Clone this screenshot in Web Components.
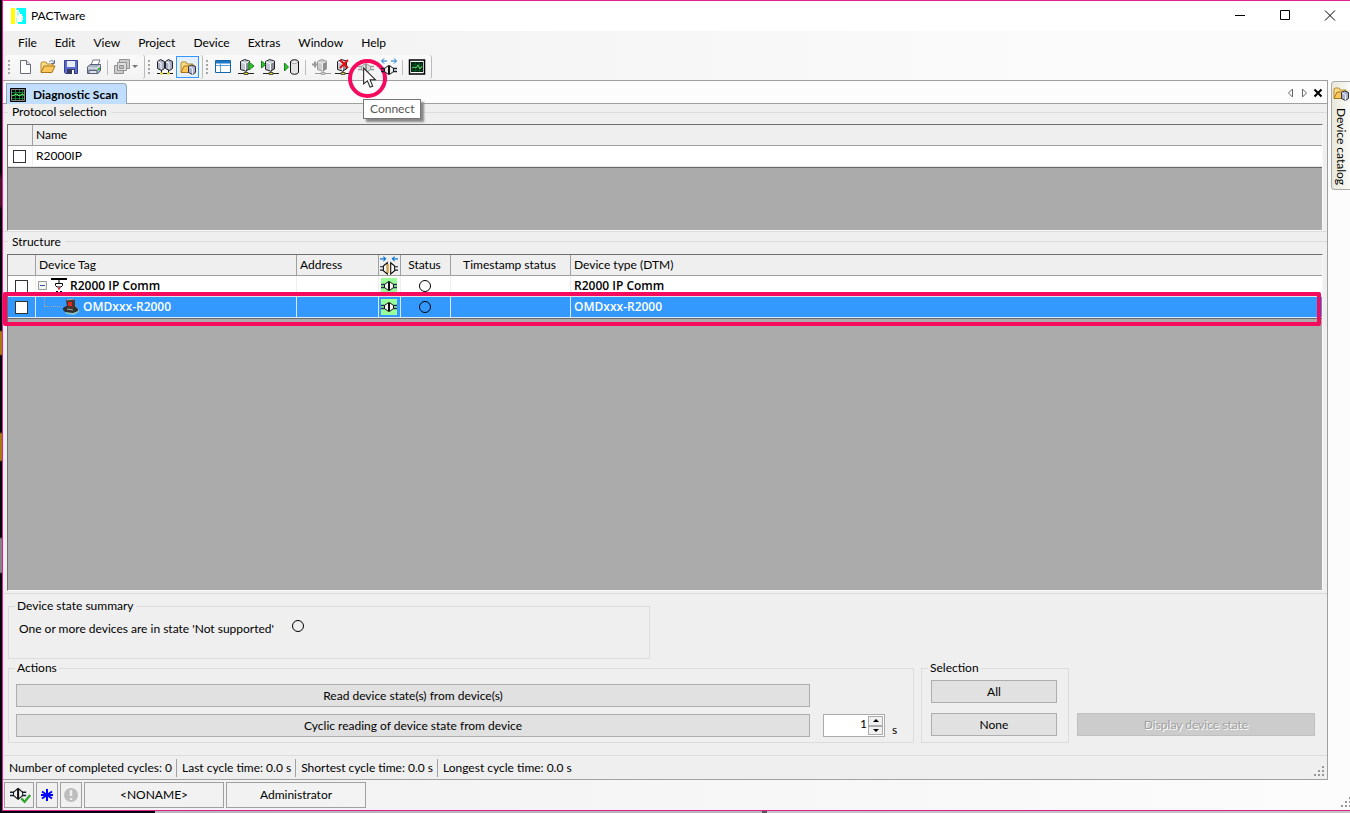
<!DOCTYPE html>
<html lang="en">
<head>
<meta charset="utf-8">
<title>PACTware</title>
<style>
html,body{height:100%;margin:0}
body{font:12px/16px Lato,"Open Sans",sans-serif;color:#000;background:#000;overflow:hidden}
</style>
</head>
<body>
<pact-window></pact-window>
<script>
const G = '#9a9a9a';
/* device block on a bus line, shared by several toolbar icons */
const cube = (f, s, l, y) => `<path d="M2.500 2.500l4-2 5 1.500v8l-4 2-5-1.500z" fill="${f}" stroke="${s}"/><path d="M3 3l4.500 1.500v7M7.500 4.500l3.500-2" fill="none" stroke="${l}"/><path d="M8 4.500v7l3-1.500V3z" fill="#000" opacity=".3"/><path d="M8 12v3" stroke="${s}"/><path d="M0 14.500h16" stroke="${s}"/><path d="M6 13.500h4v2H6z" fill="${y}" stroke="${s}" stroke-width=".7"/>`;
const plug = (c, f, b, y) => `<g transform="translate(0 ${y})"><path d="M0 6.500h4M12 6.500h4M0 9.500h4M12 9.500h4" stroke="${b}" stroke-width="1.400"/><path d="M7.500 3.500L3.500 6.500v3l4 3zM8.500 3.500l4 3v3l-4 3z" fill="${f}" stroke="${c}"/></g>`;
const folder = `<path d="M1 13V4l1-1h4l1 2h6v3" fill="#f7dc8a" stroke="#b88a2a"/><path d="M1 13.500L4 7h11l-3 6.500z" fill="#fbc65a" stroke="#a8761c"/>`;
const ICONS = {
 logo:`<path d="M0 0h4v16H0z" fill="#ff0"/><path d="M5.500 0h9.500v16H7v-2h4v-2h1V8h-1V6H9V4H8V2H5.500z" fill="#0ff"/><path d="M5.500 3.500h1v4h1v-4M5.500 10v5" fill="none" stroke="#9ff"/>`,
 page:`<path d="M3.500 1.500h6l4 4v9h-10z" fill="#fff" stroke="#666b7a"/><path d="M9.500 1.500v4h4" fill="#dde" stroke="#666b7a"/>`,
 open:folder+`<path d="M9 3c2-2 4-2 5 1M14.500 1v3.500H11" fill="none" stroke="#667290"/>`,
 save:`<path d="M1.500 1.500h13v13h-12l-1-1z" fill="#5b6bd0" stroke="#343f92"/><path d="M4 2h8v6H4z" fill="#e8ecf8"/><path d="M4 10h8v5H4z" fill="#353a58"/><path d="M9 11h2v4H9z" fill="#fff"/>`,
 print:`<path d="M5 6l2-5h7l-2 5z" fill="#fff" stroke="#778"/><path d="M1.500 8L4 5.500h10.500v6L12 14.500H1.500z" fill="#aab3c5" stroke="#566074"/><path d="M2 9h10l2-3" fill="none" stroke="#eee"/><path d="M3 11.500h8v3H3z" fill="#dde3ee" stroke="#566074"/><path d="M12 9h2v2h-2z" fill="#25b82a"/>`,
 stack:`<g stroke="#929292" fill="#ccc"><path d="M5.500.500h10v9h-10z"/><path d="M.500 6.500h9v8h-9z"/><path d="M3.500 3.500h9v8h-9z" fill="#dedede"/><path d="M5.500 6.500h4v3h-4z" fill="#bbb"/></g>`,
 net:`<g fill="#a9adc6" stroke="#222"><path d="M.500 2.500l3-2 4 2v7l-3 2-4-2zM8.500 2.500l3-2 4 2v7l-3 2-4-2z"/><path d="M4.500 11v3M11.500 11v3" fill="none"/></g><path d="M1 3l3 1v6M9 3l3 1v6" fill="none" stroke="#fff"/><path d="M0 14.500h16" stroke="#111"/><path d="M3 13.500h3v2H3zM10 13.500h3v2h-3z" fill="#dfd533"/>`,
 catalog:folder+`<path d="M8.500 7.500l3-1.500 4 1.500v6l-3 2-4-2z" fill="#aab1ce" stroke="#333"/><path d="M9 8l3.500 1.500v6" fill="none" stroke="#eef"/>`,
 table:`<path d="M.500 1.500h15v12H.500z" fill="#fff" stroke="#1464a8"/><path d="M1 2h14v2.500H1z" fill="#1d78c8"/><path d="M5.500 4v9M1 6.500h14" stroke="#57a2dc"/>`,
 upload:cube('#c3c6d6','#222','#fff','#dfd533')+`<path d="M11 3l5 4-5 4z" fill="#2fc72f" stroke="#168116"/>`,
 download:`<g transform="translate(2 0)">`+cube('#c3c6d6','#222','#fff','#dfd533')+`</g><path d="M.500 2l4 3.500-4 3.500z" fill="#2fc72f" stroke="#168116"/>`,
 store:`<path d="M6.500 3c0-3 8-3 8 0v10c0 3-8 3-8 0z" fill="#e4e4e4" stroke="#111"/><path d="M7 3c1 2 6 2 7 0" fill="#fff" stroke="#999"/><path d="M.500 4l4 4-4 4z" fill="#2fc72f" stroke="#168116"/>`,
 addoff:`<g transform="translate(3 0)">`+cube('#ccc',G,'#eee','#ccc')+`</g><path d="M0 5.500h6M3 2.500v6" stroke="${G}" stroke-width="2"/>`,
 remove:cube('#c3c6d6','#222','#fff','#dfd533')+`<path d="M5 1l8 8M13 1L5 9" stroke="#e01010" stroke-width="2"/>`,
 connect:plug(G,'#ddd',G,1)+`<path d="M2 1.500h4M10 1.500h4" stroke="${G}"/>`,
 disconnect:plug('#111','#eee','#123',3)+`<path d="M1 2h5M10 2h5M3-.500L.500 2 3 4.500M13-.500L15.500 2 13 4.500" fill="none" stroke="#0b6fd0"/>`,
 scan:`<path d="M.500 1h15v14H.500z" fill="#fff" stroke="#000" stroke-width="1.500"/><path d="M2 3h12v10H2z" fill="#062a14"/><path d="M3 5.500h10M3 8.500h10M3 11.500h10M6.500 3v10M10.500 3v10" stroke="#0a6b2b" stroke-width=".5"/><path d="M3 9l2-1 2 1 2-3 2 4 2-3" fill="none" stroke="#6bdc72"/>`,
 tabscan:`<path d="M.500 1.500h15v13H.500z" fill="#000" stroke="#000"/><path d="M2 5.500h12M2 8.500h12M2 11.500h12M5.500 3v10M9.500 3v10M12.500 3v10" stroke="#127a30"/><path d="M1.500 2.500h13v11h-13z" fill="none" stroke="#ddd" stroke-width=".6"/><path d="M2 9l2-1 3-1 2 2 3-2 2 1" fill="none" stroke="#69ff75"/>`,
 link:plug('#111','#f5f5f5','#20304a',0),
 headlink:`<path d="M0 2.500h5M3 .500l2 2-2 2M16 2.500h-5M13 .500l-2 2 2 2" fill="none" stroke="#0b76d8"/><path d="M0 9.500h3M13 9.500h3M0 12.500h3M13 12.500h3" stroke="#123"/><path d="M6.500 6L3 9v4l3.500 3z" fill="#fff" stroke="#111"/><path d="M9.500 6L13 9v4l-3.500 3z" fill="#fff" stroke="#111"/><path d="M7 7v8" stroke="#e6a11b" stroke-width="1.500"/>`,
 ready:`<g transform="scale(.9 1)">`+plug('#111','#f5f5f5','#123',-1)+`</g><path d="M10 11l3 3 5-6" fill="none" stroke="#2fa42f" stroke-width="2"/>`,
 star:`<path d="M8 2v12M3 4.500l10 7M13 4.500l-10 7M2 8h12" stroke="#00f" stroke-width="2"/>`,
 warn:`<circle cx="8" cy="8" r="7" fill="#bdbdbd"/><path d="M8 3v6M8 11v2" stroke="#eee" stroke-width="2.500"/>`,
 comm:`<path d="M0 1h16" stroke="#000" stroke-width="2"/><path d="M8 2v3" stroke="#000"/><path d="M4.500 5.500h7v2L10 9H6L4.500 7.500z" fill="#fff" stroke="#000"/><path d="M7 9.500h2v2H7z" fill="#e22"/><path d="M5 13.500h2M9 13.500h2" stroke="#000"/>`,
 lidar:`<path d="M1 10l2-3 9-1 4 5v2l-5 3-8-1z" fill="#8cc5c3"/><path d="M0 9l3-2h9l3 3v2l-5 2-8-1-2-2z" fill="#30302f"/><path d="M3 1l8-1 1 2v6c-2 2-7 2-8 0z" fill="#493530"/><path d="M5 3h4v4H5z" fill="#df2a20"/><path d="M4 1l7-1M4 10l6 1" stroke="#aaa"/>`,
 min:`<path d="M3 7.500h10" stroke="#000"/>`,
 max:`<path d="M3.500 2.500h9v9h-9z" fill="none" stroke="#000"/>`,
 close:`<path d="M3 2.500l10 10M13 2.500L3 12.500" stroke="#000"/>`,
 left:`<path d="M10.500 4v8l-4-4z" fill="none" stroke="#666"/>`,
 right:`<path d="M6.500 4v8l4-4z" fill="none" stroke="#666"/>`,
 bold:`<path d="M4.500 4.500l7 7M11.500 4.500l-7 7" stroke="#000" stroke-width="2"/>`,
 ring:`<circle cx="8" cy="8" r="5.500" fill="none" stroke="#000"/>`,
 down:`<path d="M5 6h6l-3 3z" fill="#777"/>`,
 minus:`<path d="M3.500 3.500h8v8h-8z" fill="#f4f4f4" stroke="#999"/><path d="M5 7.500h5" stroke="#3453a0"/>`,
 grip:`<path d="M11 3h2v2h-2zM7 7h2v2H7zM11 7h2v2h-2zM3 11h2v2H3zM7 11h2v2H7zM11 11h2v2h-2z" fill="#999"/>`,
 pointer:`<path d="M2.500 .500v15l3.500-3 2.500 6 2.500-1-2.500-6h5z" fill="#fff" stroke="#222"/>`
};
function define(name, html, setup) {
  const t = document.createElement('template');
  t.innerHTML = '<style>*{box-sizing:border-box}:host{display:block;box-sizing:border-box}</style>' + html;
  customElements.define(name, class extends HTMLElement {
    connectedCallback() {
      if (this.shadowRoot) return;
      this.attachShadow({mode:'open'}).append(t.content.cloneNode(true));
      if (setup) setup(this, this.shadowRoot);
    }
  });
}

define('pact-icon', `<style>:host{width:16px;height:16px;flex:none}svg{display:block;width:100%;height:100%;overflow:visible}</style>`, (h, r) => {
  r.innerHTML += `<svg viewBox="0 0 16 16" aria-hidden="true">${ICONS[h.getAttribute('name')]}</svg>`;
});

define('pact-titlebar', `<style>
:host{display:flex;align-items:center;height:30px;padding-left:8px;background:#fff}
.t{flex:1;margin-left:4px}
button{width:45px;height:30px;border:0;background:none;padding:0;display:grid;place-items:center}
nav{display:flex;margin-right:-2px}
</style><pact-icon name="logo"></pact-icon><span class="t"><slot></slot></span>
<nav><button aria-label="Minimize"><pact-icon name="min"></pact-icon></button><button aria-label="Maximize"><pact-icon name="max"></pact-icon></button><button aria-label="Close"><pact-icon name="close"></pact-icon></button></nav>`);

define('pact-menubar', `<style>
:host{display:flex;height:24px;align-items:center;padding-left:6px}
button{font:inherit;color:inherit;border:0;background:none;padding:0 9px;height:20px}
</style><button>File</button><button>Edit</button><button>View</button><button>Project</button><button>Device</button><button>Extras</button><button>Window</button><button>Help</button>`);

define('pact-tool', `<style>
button{position:relative;display:flex;align-items:center;justify-content:center;width:23px;height:22px;padding:0;border:1px solid transparent;background:none;font:inherit}
:host([pressed]) button{border-color:#3399ff;background:#e3effb}
</style><button><pact-icon></pact-icon><slot></slot></button>`, (h, r) => {
  const i = r.querySelector('pact-icon');
  const n = document.createElement('pact-icon');
  n.setAttribute('name', h.getAttribute('icon'));
  i.replaceWith(n);
  r.querySelector('button').setAttribute('aria-label', h.getAttribute('label'));
});

define('pact-toolstrip', `<style>
:host{display:flex;align-items:center;height:24px;padding-right:3px;border-right:1px solid #bbb;border-radius:3px;background:linear-gradient(#fafafa,#f3f3f3)}
i{width:2px;height:15px;margin:0 3px;background:repeating-linear-gradient(#a5a5a5 0 2px,transparent 2px 4px)}
</style><i></i><slot></slot>`);

define('pact-toolbar', `<style>
:host{display:flex;height:25px;align-items:start;padding-left:2px;position:relative;z-index:5}
hr{width:1px;height:15px;border:0;margin:0 2px;background:#bdbdbd}
.drop{margin:0 -2px 0 -6px}
.hot{position:relative}
.ring{position:absolute;left:-6px;top:3px;width:39px;height:39px;border:4px solid #f50a5e;border-radius:50%}
.cur{position:absolute;left:7px;top:10px;width:17px;height:20px}
.tip{position:absolute;left:9px;top:43px;height:20px;padding:0 6px;line-height:18px;border:1px solid #767676;background:#fff;color:#575757;box-shadow:3px 3px 2px #888}
</style>
<pact-toolstrip><pact-tool icon="page" label="New"></pact-tool><pact-tool icon="open" label="Open"></pact-tool><pact-tool icon="save" label="Save"></pact-tool><pact-tool icon="print" label="Print"></pact-tool><hr><pact-tool icon="stack" label="Windows"></pact-tool><pact-icon class="drop" name="down"></pact-icon></pact-toolstrip>
<pact-toolstrip><pact-tool icon="net" label="Project view"></pact-tool><pact-tool icon="catalog" label="Device catalog" pressed></pact-tool></pact-toolstrip>
<pact-toolstrip><pact-tool icon="table" label="Device data"></pact-tool><pact-tool icon="upload" label="Load from device"></pact-tool><pact-tool icon="download" label="Store to device"></pact-tool><pact-tool icon="store" label="Parameter"></pact-tool><hr><pact-tool icon="addoff" label="Add device"></pact-tool><pact-tool icon="remove" label="Delete device"></pact-tool><div class="hot"><pact-tool icon="connect" label="Connect device"></pact-tool><div class="ring"></div><pact-icon class="cur" name="pointer"></pact-icon><div class="tip" role="tooltip">Connect</div></div><pact-tool icon="disconnect" label="Disconnect"></pact-tool><hr><pact-tool icon="scan" label="Diagnostic scan"></pact-tool></pact-toolstrip>`);

define('pact-tabstrip', `<style>
:host{display:flex;height:23px;border-bottom:1px solid #a0a0a0;padding:2px 0 0 3px;background:#fcfcfc}
.tab{display:flex;align-items:center;gap:7px;height:21px;margin-bottom:-1px;padding:1px 8px 0 3px;border:1px solid #91a7b4;border-bottom:0;border-radius:0 4px 0 0;background:#c1deff;font:inherit;font-weight:700;color:#000;white-space:nowrap}
nav{margin-left:auto;display:flex;align-items:center;padding-right:3px}
nav button{border:0;background:none;padding:0;width:14px;display:grid;place-items:center}
</style><button class="tab"><pact-icon name="tabscan"></pact-icon><slot></slot></button>
<nav><button aria-label="Previous"><pact-icon name="left"></pact-icon></button><button aria-label="Next"><pact-icon name="right"></pact-icon></button><button aria-label="Close tab"><pact-icon name="bold"></pact-icon></button></nav>`);

define('pact-caption', `<style>
:host{display:flex;align-items:center;height:20px;gap:4px;padding:0 0 4px 9px}
:host::after{content:"";flex:1;height:1px;background:#dcdcdc}
:host::before{content:"";width:5px;margin-left:-9px;height:1px;background:#dcdcdc}
</style><slot></slot>`);

const grid = `
:host{background:#ababab;border:1px solid #6f6f6f;border-right-color:#f8f8f8;border-bottom-color:#f8f8f8;position:relative}
table{width:100%;border-collapse:separate;border-spacing:0;table-layout:fixed;border-bottom:1px solid #696969}
th,td{height:21px;padding:0 0 0 3px;text-align:left;font-weight:400;line-height:18px;overflow:hidden;white-space:nowrap;border-right:1px solid #eee}
th{background:#efefef;border-right-color:#a0a0a0;border-bottom:1px solid #a0a0a0}
td{background:#fff;border-bottom:1px solid #e4e4e4}
th:last-child,td:last-child{border-right:0}
input{appearance:none;display:block;width:13px;height:13px;margin:0;border:1px solid #333;background:#fff}
`;
define('pact-protocols', `<style>${grid}
.c{width:25px}td.c{padding-left:5px}
</style><table><thead><tr><th class="c"></th><th>Name</th></tr></thead><tbody><tr><td class="c"><input type="checkbox" aria-label="R2000IP"></td><td>R2000IP</td></tr></tbody></table>`);

define('pact-structure', `<style>${grid}
td.c{padding-left:7px}
.m{padding:0 2px 0 0;text-align:center}
.m pact-icon{margin:auto}
.link pact-icon{width:18px;height:18px}
td.link pact-icon{background:#99ff99;width:16px;height:16px}
b{font-family:"Open Sans",sans-serif;font-weight:600}
.n{display:flex;align-items:center}
.n b{margin-left:4px}
.tree{margin-left:-4px}
.tree b{margin-left:3px}
.branch{width:18px;height:12px;margin:-12px 1px 0 5px;border-left:1px dotted #aaa;border-bottom:1px dotted #aaa}
tr.on td{background:#3399ff;color:#fff;border-color:#dceaf8}
.mark{position:absolute;left:-5px;right:1px;top:37px;height:34px;border:4px solid #f50a5e;border-radius:2px;z-index:2}
</style><table><colgroup><col style="width:28px"><col style="width:261px"><col style="width:82px"><col style="width:22px"><col style="width:50px"><col style="width:120px"><col></colgroup>
<thead><tr><th></th><th>Device Tag</th><th>Address</th><th class="m link"><pact-icon name="headlink"></pact-icon></th><th class="m">Status</th><th class="m">Timestamp status</th><th>Device type (DTM)</th></tr></thead>
<tbody><tr><td class="c"><input type="checkbox" aria-label="R2000 IP Comm"></td><td><div class="n tree"><pact-icon name="minus"></pact-icon><pact-icon name="comm"></pact-icon><b>R2000 IP Comm</b></div></td><td></td><td class="m link"><pact-icon name="link"></pact-icon></td><td class="m"><pact-icon name="ring"></pact-icon></td><td></td><td><b>R2000 IP Comm</b></td></tr>
<tr class="on"><td class="c"><input type="checkbox" aria-label="OMDxxx-R2000"></td><td><div class="n"><span class="branch"></span><pact-icon name="lidar"></pact-icon><b>OMDxxx-R2000</b></div></td><td></td><td class="m link"><pact-icon name="link"></pact-icon></td><td class="m"><pact-icon name="ring"></pact-icon></td><td></td><td><b>OMDxxx-R2000</b></td></tr></tbody></table><div class="mark"></div>`);

define('pact-group', `<style>
fieldset{position:relative;margin:0;padding:0;border:1px solid #dcdcdc;height:100%;min-width:0}
legend{position:absolute;left:6px;top:-9px;padding:0 2px;background:#efefef;white-space:nowrap}
</style><fieldset><legend></legend><slot></slot></fieldset>`, (h, r) => { r.querySelector('legend').textContent = h.getAttribute('label'); });

define('pact-button', `<style>
button{display:block;width:100%;height:23px;padding:0;border:1px solid #adadad;background:#e1e1e1;font:inherit;color:#000}
button:disabled{background:#ccc;border-color:#bfbfbf;color:#a0a0a0;text-shadow:1px 1px #fff}
</style><button><slot></slot></button>`, (h, r) => { r.querySelector('button').disabled = h.hasAttribute('disabled'); });

define('pact-spinner', `<style>
:host{display:flex;width:62px;height:23px;border:1px solid #ababab;background:#fff;padding:1px}
input{flex:1;min-width:0;border:0;padding:0 1px 3px 0;font:inherit;text-align:right;background:none}
span{display:flex;flex-direction:column;width:15px}
button{flex:1;padding:0;border:1px solid #acacac;background:#f0f0f0;display:grid;place-items:center}
i{border:3px solid transparent;border-top:0;border-bottom-color:#000}
.d{transform:rotate(180deg)}
</style><input type="text" value="1" aria-label="Cycle interval in seconds"><span><button aria-label="Increase"><i></i></button><button aria-label="Decrease"><i class="d"></i></button></span>`);

define('pact-controls', `<style>
:host{padding:12px 12px 12px 5px;border-top:1px solid #dcdcdc}
.sum{width:642px;height:53px}
.state{display:flex;padding:14px 0 0 10px;gap:16px}
.state pact-icon{margin-top:-3px}
.row{display:flex;height:75px;margin-top:9px}
.act{flex:1}
.sel{width:148px;margin-left:7px}
.in{display:grid;grid-template-columns:1fr 62px 12px;column-gap:7px;row-gap:7px;padding:15px 15px 0 7px;align-items:start}
.in .one{grid-column:1}
.in pact-spinner{margin-left:6px;margin-right:-6px}
.in small{font-size:12px;line-height:14px;margin:9px 0 0 6px}
.pick{display:grid;gap:10px;padding:11px 11px 0 9px}
.show{width:238px;margin:45px 0 0 8px}
</style>
<pact-group class="sum" label="Device state summary"><div class="state"><span>One or more devices are in state 'Not supported'</span><pact-icon name="ring"></pact-icon></div></pact-group>
<div class="row"><pact-group class="act" label="Actions"><div class="in"><pact-button class="one">Read device state(s) from device(s)</pact-button><pact-button class="one">Cyclic reading of device state from device</pact-button><pact-spinner></pact-spinner><small>s</small></div></pact-group>
<pact-group class="sel" label="Selection"><div class="pick"><pact-button>All</pact-button><pact-button>None</pact-button></div></pact-group>
<pact-button class="show" disabled>Display device state</pact-button></div>`);

define('pact-cycles', `<style>
:host{display:flex;align-items:center;height:24px;border-top:1px solid #dcdcdc;padding-left:6px}
span{height:18px;line-height:18px;padding-right:4px;margin-right:5px;border-right:1px solid #a0a0a0;white-space:nowrap}
span:last-of-type{border:0}
pact-icon{margin:7px 0 0 auto}
</style><span>Number of completed cycles: 0</span><span>Last cycle time: 0.0 s</span><span>Shortest cycle time: 0.0 s</span><span>Longest cycle time: 0.0 s</span><pact-icon name="grip"></pact-icon>`);

define('pact-status', `<style>
:host{display:flex;gap:2px;height:30px;padding:2px 0 2px 1px;background:linear-gradient(90deg,#f0f0f0,#fcfcfc)}
div{display:grid;place-items:center;height:26px;width:22px;border:1px solid #a0a0a0}
.w{width:30px}.t{width:140px}
.ready{width:18px;height:18px}
.g{margin:12px -4px 0 auto}
</style><div class="w"><pact-icon class="ready" name="ready"></pact-icon></div><div><pact-icon name="star"></pact-icon></div><div><pact-icon name="warn"></pact-icon></div><div class="t">&lt;NONAME&gt;</div><div class="t">Administrator</div><pact-icon class="g" name="grip"></pact-icon>`);

define('pact-sidetab', `<style>
:host{width:22px;padding:1px 0 0 3px;background:#fcfcfc}
button{display:flex;align-items:center;gap:7px;writing-mode:vertical-lr;width:19px;height:109px;padding:3px 1px;border:1px solid #aaa;border-right:0;border-radius:4px 0 0 4px;background:linear-gradient(90deg,#e8e8da,#fbfbf8);font:inherit;white-space:nowrap}
</style><button><pact-icon name="catalog"></pact-icon><slot></slot></button>`);

define('pact-window', `<style>
:host{display:flex;flex-direction:column;height:100vh;padding-bottom:2px;background:linear-gradient(90deg,#06040c 155px,#b8b8b8 155px 762px,#555 762px 767px,#c4c4c4 767px) bottom/100% 2px no-repeat,linear-gradient(#06040c 172px,#4a1230 180px 205px,#06040c 210px 330px,#a87a10 332px 354px,#06040c 356px 432px,#a87a10 434px 460px,#06040c 462px 537px,#8a8088 539px 572px,#06040c 574px)}
.win{flex:1;display:flex;flex-direction:column;min-height:0;margin-left:2px;border:1px solid #e0218f;border-right:0}
.top{background:linear-gradient(90deg,#f0f0f0,#fbfbfb 80%)}
.mid{flex:1;display:flex;min-height:0}
main{flex:1;min-width:0;display:flex;flex-direction:column;border:1px solid #a0a0a0;border-left:0;background:#efefef}
.g{margin:0 4px}
.p{height:107px}
.s{flex:1;margin-bottom:2px}
.second{height:23px;border-top:1px solid #dcdcdc;padding-bottom:3px}
</style>
<div class="win"><pact-titlebar>PACTware</pact-titlebar>
<div class="top"><pact-menubar></pact-menubar><pact-toolbar></pact-toolbar></div>
<div class="mid"><main><pact-tabstrip>Diagnostic Scan</pact-tabstrip>
<pact-caption>Protocol selection</pact-caption><pact-protocols class="g p"></pact-protocols>
<pact-caption class="second">Structure</pact-caption><pact-structure class="g s"></pact-structure>
<pact-controls></pact-controls><pact-cycles></pact-cycles></main><pact-sidetab>Device catalog</pact-sidetab></div>
<pact-status></pact-status></div>`);
</script>
</body>
</html>
